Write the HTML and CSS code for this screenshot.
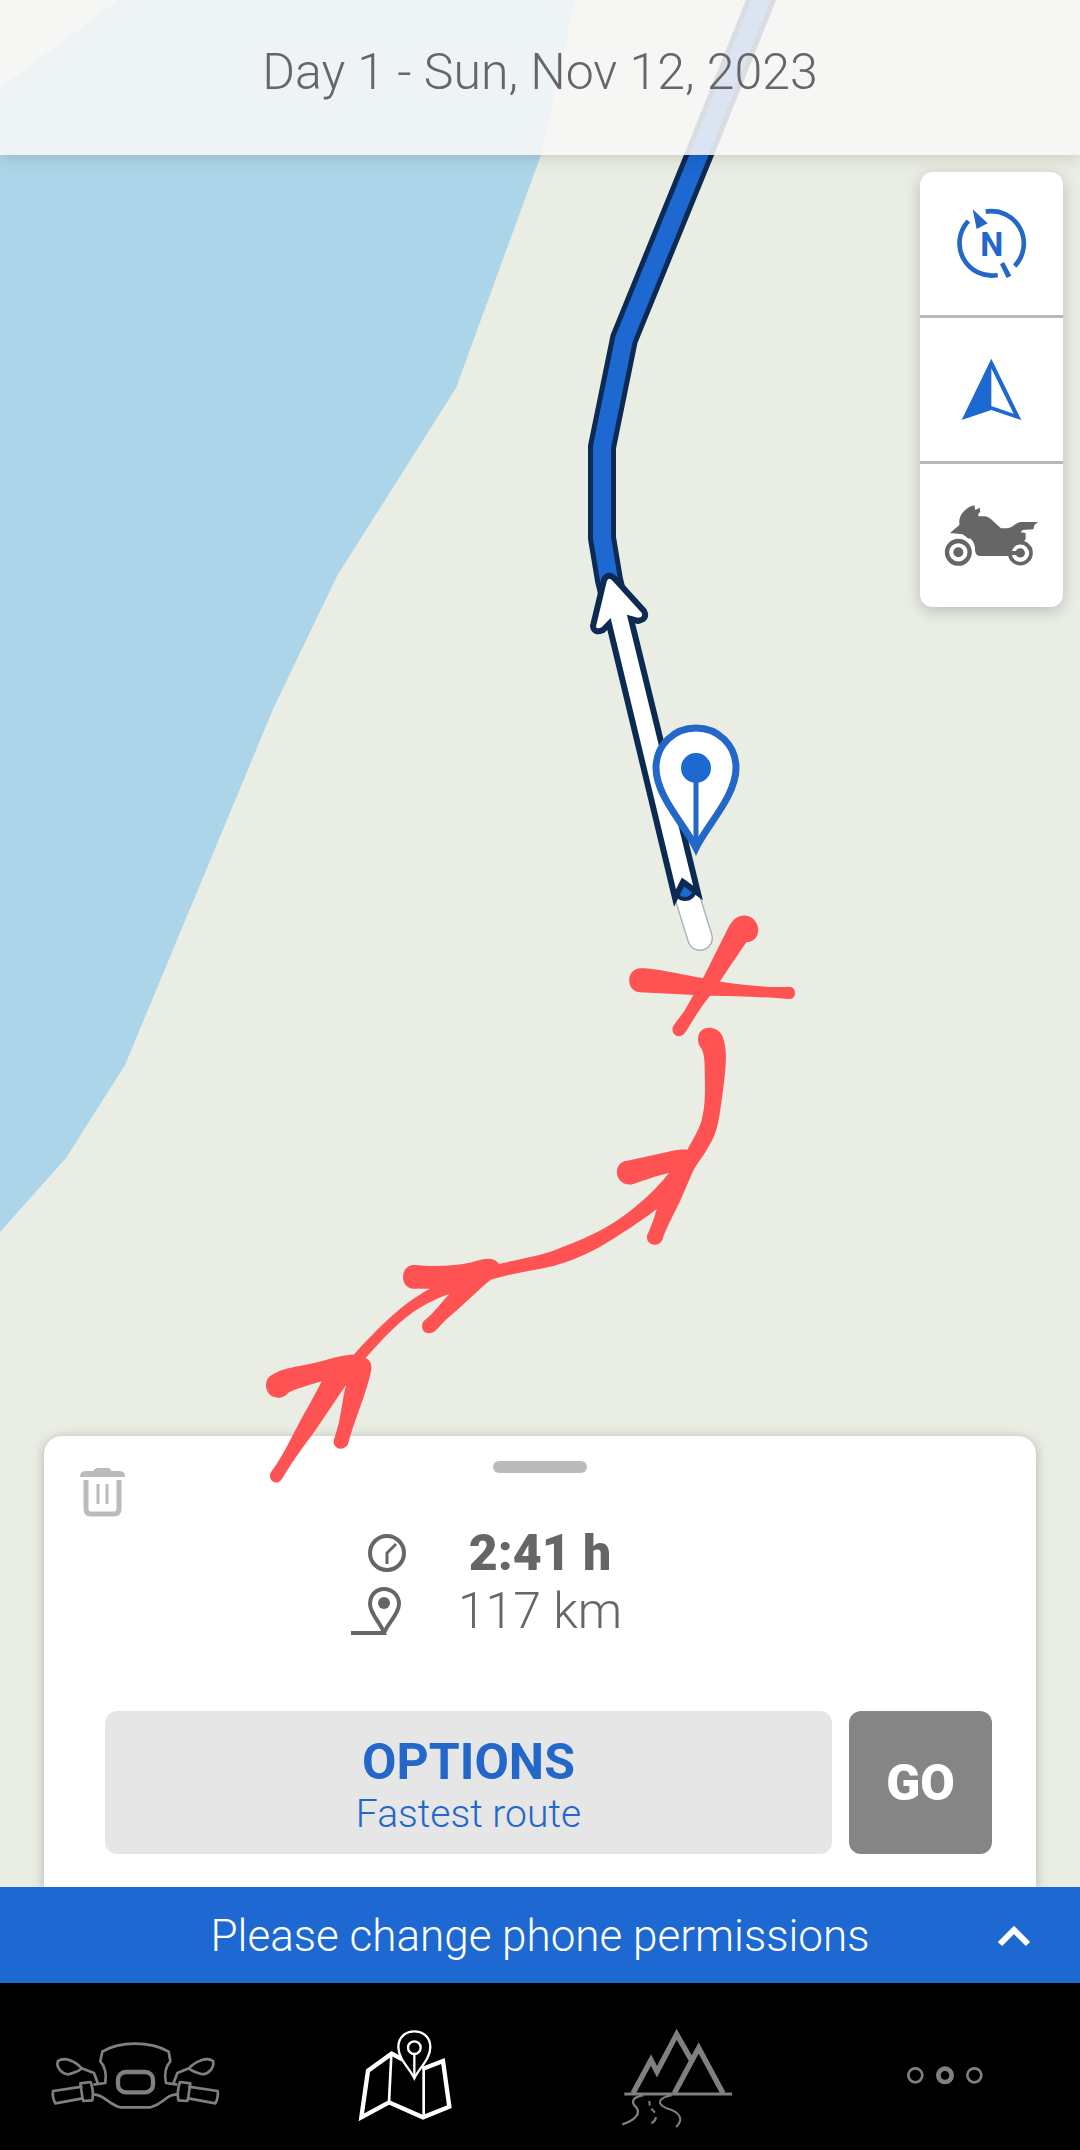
FILE: index.html
```html
<!DOCTYPE html>
<html lang="en">
<head>
  <meta charset="UTF-8">
  <meta name="viewport" content="width=device-width, initial-scale=1.0">
  <title>Day 1 - Sun, Nov 12, 2023</title>
  <link rel="stylesheet" href="styles.css">
</head>
<body>
  <main class="map-view">
    <svg class="map" viewBox="0 0 1080 1887" preserveAspectRatio="xMidYMin slice" aria-hidden="true">
      <rect class="land" width="1080" height="1887"/>
      <path class="water" d="M118 0H575L541 155L456 388L337 576L274 707L125 1065L66 1158L0 1232V88Z"/>

      <!-- route -->
      <path class="route-outline" d="M765 -10L699 155L624 339L602 447V538L609 580L620 625"/>
      <path class="route" d="M765 -10L699 155L624 339L602 447V538L609 580L620 625"/>

      <!-- start of the route with direction arrow -->
      <path class="tail-outline" d="M686 893L700 938"/>
      <path class="tail" d="M686 893L700 938"/>
      <circle class="start-dot" cx="685" cy="889" r="10"/>
      <path class="arrow" d="M675 898L609 624L603 630Q594 634 593 626L604 580Q608 572 615 579L644 611Q648 619 638 621L631 619L698 893L683 882Z"/>

      <!-- waypoint -->
      <path class="pin" d="M696 848C685 825 656 796 656 768C656 745 674 728 696 728S736 745 736 768C736 796 707 825 696 848Z"/>
      <circle class="pin-dot" cx="696" cy="768" r="15"/>
      <path class="pin-line" d="M696 770V844"/>
    </svg>

    <header class="day-header">
      <h1>Day 1 - Sun, Nov 12, 2023</h1>
    </header>

    <div class="map-controls">
      <button type="button" aria-label="North up">
        <svg viewBox="0 0 429 429">
          <g fill="none" stroke="#2367c9" stroke-width="14">
            <path d="M197 119A97 97 0 0 1 284 282"/>
            <path d="M145 147A97 97 0 0 0 233 309"/>
          </g>
          <path fill="#2367c9" d="M158 112L203 154L170 171ZM240 277L252 270L274 311L260 318Z"/>
          <text class="compass-n" x="215" y="252">N</text>
        </svg>
      </button>
      <button type="button" aria-label="Center on position">
        <svg viewBox="0 0 429 429">
          <path fill="#1d68d1" fill-rule="evenodd" d="M214 122L304 306L214 276L125 306ZM214 151V264L281 287Z"/>
        </svg>
      </button>
      <button type="button" aria-label="Motorcycle">
        <svg viewBox="0 0 429 429">
          <g fill="#666">
            <path d="M90 207L118 183V167C122 148 138 130 163 124L166 138L179 131L181 143L175 149V157H195C212 159 224 178 243 193H262C282 189 288 176 302 174L354 174L344 182L340 196L308 198L302 205L317 207V224L311 234L338 252L330 262L315 254L290 262L272 276H181C164 276 166 258 162 242L148 226L128 211Z"/>
            <circle cx="115" cy="265" r="15"/>
            <circle cx="301" cy="267" r="14"/>
            <path d="M270 259H300V275H270Z"/>
          </g>
          <g fill="none">
            <circle cx="115" cy="266" r="40" stroke="#fff" stroke-width="8"/>
            <circle cx="301" cy="267" r="32" stroke="#666" stroke-width="11"/>
            <circle cx="301" cy="267" r="20" stroke="#fff" stroke-width="11"/>
            <circle cx="115" cy="265" r="34" stroke="#666" stroke-width="13"/>
            <path d="M148 224Q165 239 162 261" stroke="#fff" stroke-width="5"/>
            <path d="M274 267H298" stroke="#666" stroke-width="12"/>
          </g>
        </svg>
      </button>
    </div>

    <section class="sheet">
      <div class="sheet-top">
        <button type="button" class="delete" aria-label="Delete route">
          <svg viewBox="0 0 45 49">
            <path fill="#bbb" d="M0 9Q0 3 5 3H13L16 0H29L32 3H40Q45 3 45 9Z"/>
            <path fill="none" stroke="#bbb" stroke-width="5" d="M6 12V41Q6 46 11 46H34Q39 46 39 41V12"/>
            <path stroke="#bbb" stroke-width="3" d="M18 16V36M27 16V36"/>
          </svg>
        </button>
        <span class="handle"></span>
      </div>

      <div class="stats">
        <svg class="stat-icon" viewBox="0 0 56 58" role="img" aria-label="Duration">
          <g fill="none" stroke="#666">
            <circle cx="37" cy="29" r="17" stroke-width="4"/>
            <path d="M37 40V29L46 20" stroke-width="3"/>
          </g>
        </svg>
        <strong>2:41 h</strong>
        <svg class="stat-icon" viewBox="0 0 56 58" role="img" aria-label="Distance">
          <path fill="none" stroke="#666" stroke-width="4" d="M1 51H34C31 41 20 32 20 22C20 13 26 7 34 7S49 13 49 22C49 32 38 41 34 51"/>
          <circle cx="34" cy="21" r="6" fill="#666"/>
        </svg>
        <span>117 km</span>
      </div>

      <div class="actions">
        <button type="button" class="options">
          <strong>OPTIONS</strong>
          <span>Fastest route</span>
        </button>
        <button type="button" class="go">GO</button>
      </div>
    </section>

    <!-- freehand marks, over the map and the sheet -->
    <svg class="marks" viewBox="0 0 1080 1887" preserveAspectRatio="xMidYMin slice" aria-hidden="true">
      <g fill="#ff5252" transform="translate(240 880) scale(.3827 .3954)">
        <path d="M1210 248L1275 122C1288 98 1302 90 1318 90C1342 91 1354 110 1354 127C1354 146 1341 157 1324 157C1318 164 1315 170 1254 257L1228 293C1192 338 1184 355 1165 383C1156 396 1146 397 1139 393C1129 388 1128 375 1133 368L1160 333L1185 291Z"/>
        <path d="M1046 223C1080 222 1150 238 1210 248L1254 257C1300 264 1370 273 1436 270C1447 271 1451 279 1450 288C1449 297 1441 301 1434 301C1380 296 1290 294 1228 293L1046 284C1028 283 1017 270 1017 254C1017 237 1028 224 1046 223Z"/>
        <path d="M1206 426C1193 413 1194 389 1208 379C1224 368 1247 374 1258 390C1277 425 1269 480 1261 540C1251 612 1248 640 1221 680C1207 704 1193 719 1184 736L1150 812C1118 875 1111 888 1105 907C1098 924 1082 925 1073 920C1061 913 1062 900 1066 894C1076 872 1082 855 1089 832C1040 868 1000 893 940 928C890 953 840 975 775 985C735 992 700 998 655 1011C620 1039 580 1078 536 1114L512 1139C501 1150 484 1148 478 1138C473 1126 477 1116 486 1111C510 1091 526 1069 547 1047C445 1080 393 1140 328 1209C339 1213 345 1225 343 1239C333 1290 302 1360 288 1407L282 1427C275 1440 257 1442 249 1432C244 1426 243 1417 248 1408C264 1362 266 1320 277 1277L194 1396C148 1455 134 1477 110 1514C102 1526 90 1526 83 1519C76 1511 78 1502 82 1496C119 1449 147 1381 180 1329L214 1268C170 1281 134 1289 122 1301C108 1314 84 1311 75 1299C63 1281 66 1261 83 1252C116 1231 153 1232 220 1215C249 1207 272 1201 298 1200C370 1124 420 1075 496 1034H454C436 1033 426 1020 426 1004C426 985 440 973 457 974C505 978 552 977 601 968C635 958 661 950 677 971C735 957 785 951 830 933C930 898 983 868 1040 821C1075 793 1098 768 1121 741C1085 749 1058 759 1028 769C1006 775 986 760 985 741C984 723 996 711 1012 710L1117 688C1145 681 1158 681 1169 682C1184 655 1204 624 1208 600C1218 556 1215 515 1214 465Q1213 440 1206 426Z"/>
      </g>
    </svg>
  </main>

  <button type="button" class="banner">
    <span>Please change phone permissions</span>
    <svg viewBox="0 0 34 22" aria-hidden="true">
      <path fill="none" stroke="#fff" stroke-width="6" d="M3 19L17 5L31 19"/>
    </svg>
  </button>

  <nav class="tabs">
    <a href="#ride" aria-label="Ride">
      <svg viewBox="-15 -25 660 390">
        <g fill="none" stroke="#808080" stroke-width="8" stroke-linejoin="round">
          <path d="M190 223L226 218C230 190 225 168 211 153L217 124C270 92 360 92 416 124L421 153C407 168 402 190 408 218L442 223"/>
          <path d="M190 252C225 253 230 279 270 291H362C405 279 405 253 442 252"/>
          <path d="M204 220L192 188L155 174C138 154 105 138 84 152C76 172 98 191 115 192C132 187 148 184 155 174"/>
          <path d="M430 220L442 188L477 174C494 154 530 138 549 152C555 172 534 191 518 192C501 187 484 184 477 174"/>
          <path d="M157 229L69 242Q66 261 76 279L158 264"/>
          <path d="M151 219L182 215Q192 243 187 270L160 272L157 260Z"/>
          <path d="M475 229L563 242Q566 261 556 279L475 264"/>
          <path d="M481 219L450 215Q440 243 445 270L472 272L475 260Z"/>
          <rect x="264" y="185" width="105" height="61" rx="23" stroke-width="13"/>
        </g>
      </svg>
    </a>
    <a href="#map" aria-label="Map">
      <svg viewBox="-105 -25 660 390">
        <g fill="none" stroke="#fff">
          <path stroke-width="13" d="M218 148L185 130L114 181L94 321L177 276L279 321L358 289L339 152L277 176"/>
          <path stroke-width="8" d="M184 132L177 276M281 176V320"/>
          <path fill="#000" stroke-width="7" d="M253 204C239 174 205 146 205 110C205 81 226 63 253 63S301 81 301 110C301 146 267 174 253 204Z"/>
          <circle cx="253" cy="112" r="19" stroke-width="7"/>
          <path stroke-width="7" d="M253 130V200"/>
        </g>
      </svg>
    </a>
    <a href="#tours" aria-label="Tours">
      <svg viewBox="15 -25 660 390">
        <g fill="none" stroke="#808080">
          <path stroke-width="16" d="M219 249L273 149L291 184L350 72L393 147M343 249L416 113L489 249"/>
          <path stroke-width="9" d="M193 251H516"/>
          <path stroke-width="7" d="M250 255C222 259 208 273 229 291C244 312 222 331 187 342"/>
          <path stroke-width="6" d="M335 255C298 262 286 279 320 294C362 306 372 328 348 350M268 272L269 286M274 295L285 307"/>
          <path stroke-width="7" d="M288 321Q285 335 274 338"/>
        </g>
      </svg>
    </a>
    <a href="#more" aria-label="More">
      <svg viewBox="-135 15 660 390">
        <g fill="none" stroke="#808080">
          <circle cx="106" cy="235" r="21" stroke-width="8"/>
          <circle cx="195" cy="235" r="20" stroke-width="14"/>
          <circle cx="283" cy="235" r="21" stroke-width="8"/>
        </g>
      </svg>
    </a>
  </nav>
</body>
</html>
```

FILE: styles.css
```css
* {
  box-sizing: border-box;
}

body {
  display: flex;
  flex-direction: column;
  min-height: 100vh;
  margin: 0;
  background: #000;
  color: #666;
  font-family: Roboto, "Liberation Sans", sans-serif;
  font-weight: 300;
}

button {
  margin: 0;
  padding: 0;
  border: 0;
  background: none;
  color: inherit;
  font: inherit;
  cursor: pointer;
}

svg {
  display: block;
}

/* Map */
.map-view {
  position: relative;
  display: flex;
  flex: 1;
  flex-direction: column;
  overflow: hidden;
}

.map,
.marks {
  position: absolute;
  inset: 0;
  width: 100%;
  height: 100%;
}

.marks {
  z-index: 2;
  pointer-events: none;
}

.land {
  fill: #e9ede3;
}

.water {
  fill: #add5e9;
}

.route-outline,
.route {
  fill: none;
  stroke: #0d2a52;
  stroke-width: 28px;
}

.route {
  stroke: #1d68d1;
  stroke-width: 18px;
}

.tail-outline,
.tail {
  stroke: #aab3b9;
  stroke-width: 26px;
  stroke-linecap: round;
}

.tail {
  stroke: #fff;
  stroke-width: 23px;
}

.start-dot {
  fill: #1d68d1;
  stroke: #0d2a52;
  stroke-width: 4px;
}

.arrow {
  fill: #fff;
  stroke: #0d2a52;
  stroke-width: 6px;
}

.pin {
  fill: #fff;
  stroke: #2367c9;
  stroke-width: 7px;
}

.pin-dot {
  fill: #1d68d1;
}

.pin-line {
  stroke: #2367c9;
  stroke-width: 5px;
}

/* Header */
.day-header {
  position: relative;
  display: flex;
  align-items: center;
  justify-content: center;
  height: 155px;
  padding-bottom: 12px;
  background: rgba(248, 247, 247, 0.87);
  box-shadow: 0 2px 16px rgba(0, 0, 0, 0.15);
}

.day-header h1 {
  margin: 0;
  font-size: 50px;
  font-weight: 300;
}

/* Buttons on the right of the map */
.map-controls {
  position: relative;
  display: flex;
  flex-direction: column;
  align-self: flex-end;
  gap: 3px;
  width: 143px;
  margin: 17px 17px 0 0;
  overflow: hidden;
  border-radius: 12px;
  background: #b8b8b8;
  box-shadow: 0 4px 16px rgba(0, 0, 0, 0.2);
}

.map-controls button {
  height: 143px;
  background: #fff;
}

.compass-n {
  fill: #2367c9;
  font-size: 98px;
  font-weight: 700;
  text-anchor: middle;
}

/* Bottom sheet */
.sheet {
  position: relative;
  margin: auto 44px 0;
  padding: 25px 44px 33px 61px;
  border-radius: 18px 18px 0 0;
  background: #fff;
  box-shadow: 0 2px 12px rgba(0, 0, 0, 0.25);
}

.sheet-top {
  display: grid;
  grid-template-columns: 1fr 94px 1fr;
  height: 62px;
  margin: 0 -17px 0 -34px;
}

.delete {
  display: flex;
  align-items: center;
  justify-content: center;
  width: 63px;
  height: 62px;
}

.delete svg {
  width: 45px;
  height: 49px;
}

.handle {
  height: 12px;
  border-radius: 6px;
  background: #bbb;
}

.stats {
  display: grid;
  grid-template-columns: 56px 180px 56px;
  column-gap: 44px;
  justify-content: center;
  margin: 0 -17px 0 -34px;
  padding-top: 1px;
  font-size: 50px;
  line-height: 58px;
  text-align: center;
}

.stats strong,
.stats span {
  grid-column: 2;
}

.stats strong {
  font-weight: 900;
}

.stat-icon {
  grid-column: 1;
  width: 56px;
  height: 58px;
}

.actions {
  display: flex;
  gap: 17px;
  margin-top: 71px;
}

.actions button {
  height: 143px;
  border-radius: 12px;
}

.options {
  flex: 1;
  background: #e6e6e6;
}

.actions .options {
  padding-top: 6px;
  color: #2367c9;
  font-size: 39px;
  line-height: 48px;
}

.options strong {
  display: block;
  font-size: 50px;
  font-weight: 700;
  line-height: 56px;
}

.options span {
  display: block;
}

.actions .go {
  width: 143px;
  background: #858585;
  color: #fff;
  font-size: 50px;
  font-weight: 900;
}

/* Permission banner */
.banner {
  display: grid;
  grid-template-columns: 1fr auto 1fr;
  align-items: center;
  height: 96px;
  padding: 2px 49px 0;
  background: #1d68d1;
  color: #fff;
  font-size: 44px;
}

.banner span {
  grid-column: 2;
}

.banner svg {
  justify-self: end;
  width: 34px;
  height: 22px;
}

/* Tab bar */
.tabs {
  display: grid;
  grid-template-columns: repeat(4, 1fr);
  height: 167px;
  background: #000;
}

.tabs a {
  display: flex;
  align-items: center;
  justify-content: center;
}

.tabs svg {
  width: 220px;
  height: 130px;
}
```
